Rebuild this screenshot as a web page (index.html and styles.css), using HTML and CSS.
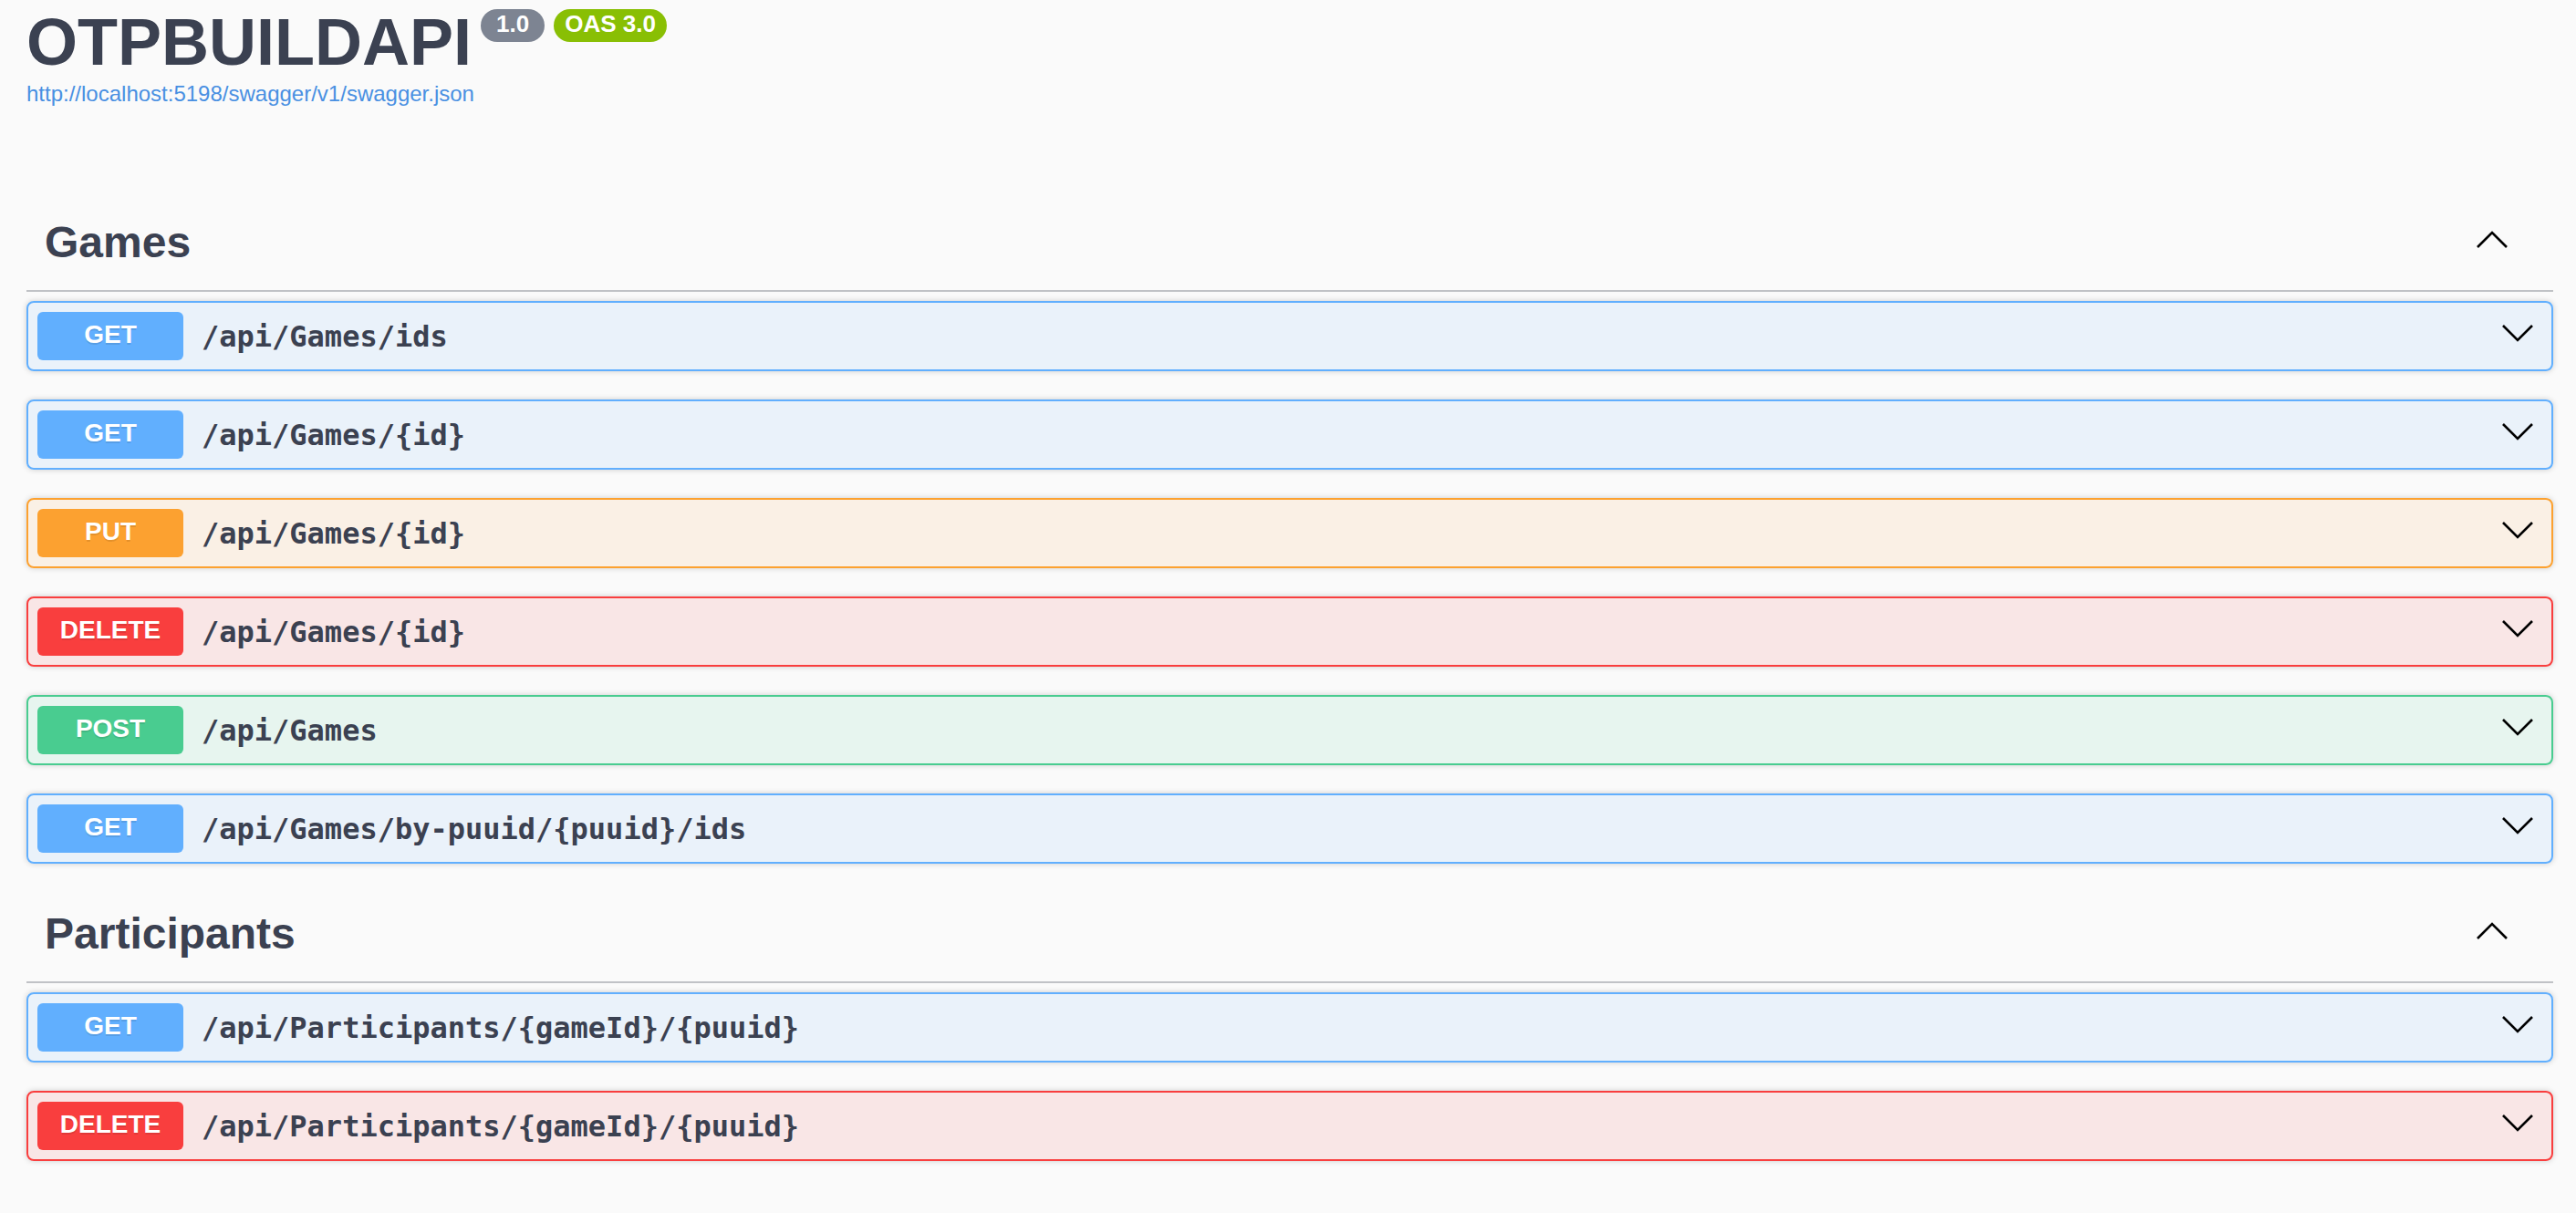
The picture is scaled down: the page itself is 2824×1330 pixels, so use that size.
FILE: index.html
```html
<!DOCTYPE html>
<html lang="en">
<head>
<meta charset="utf-8">
<title>OTPBUILDAPI</title>
<link rel="stylesheet" href="styles.css">
</head>
<body>
<div class="wrapper">
  <section class="info">
    <h2 class="title"><span class="title-text">OTPBUILDAPI</span><small class="badge badge-version">1.0</small><small class="badge badge-oas">OAS 3.0</small></h2>
    <a class="spec-link" href="#">http://localhost:5198/swagger/v1/swagger.json</a>
  </section>

  <section class="tag-section">
    <h3 class="tag"><span class="tag-name">Games</span><svg class="arrow" viewBox="0 0 40 40"><polyline points="4,25 20,9 36,25"/></svg></h3>
    <div class="opblock opblock-get"><span class="method">GET</span><span class="path">/api/Games/ids</span><svg class="arrow" viewBox="0 0 40 40"><polyline points="4,8 20,24 36,8"/></svg></div>
    <div class="opblock opblock-get"><span class="method">GET</span><span class="path">/api/Games/{id}</span><svg class="arrow" viewBox="0 0 40 40"><polyline points="4,8 20,24 36,8"/></svg></div>
    <div class="opblock opblock-put"><span class="method">PUT</span><span class="path">/api/Games/{id}</span><svg class="arrow" viewBox="0 0 40 40"><polyline points="4,8 20,24 36,8"/></svg></div>
    <div class="opblock opblock-delete"><span class="method">DELETE</span><span class="path">/api/Games/{id}</span><svg class="arrow" viewBox="0 0 40 40"><polyline points="4,8 20,24 36,8"/></svg></div>
    <div class="opblock opblock-post"><span class="method">POST</span><span class="path">/api/Games</span><svg class="arrow" viewBox="0 0 40 40"><polyline points="4,8 20,24 36,8"/></svg></div>
    <div class="opblock opblock-get"><span class="method">GET</span><span class="path">/api/Games/by-puuid/{puuid}/ids</span><svg class="arrow" viewBox="0 0 40 40"><polyline points="4,8 20,24 36,8"/></svg></div>
  </section>

  <section class="tag-section">
    <h3 class="tag"><span class="tag-name">Participants</span><svg class="arrow" viewBox="0 0 40 40"><polyline points="4,25 20,9 36,25"/></svg></h3>
    <div class="opblock opblock-get"><span class="method">GET</span><span class="path">/api/Participants/{gameId}/{puuid}</span><svg class="arrow" viewBox="0 0 40 40"><polyline points="4,8 20,24 36,8"/></svg></div>
    <div class="opblock opblock-delete"><span class="method">DELETE</span><span class="path">/api/Participants/{gameId}/{puuid}</span><svg class="arrow" viewBox="0 0 40 40"><polyline points="4,8 20,24 36,8"/></svg></div>
  </section>
</div>
</body>
</html>
```

FILE: styles.css
```css
html, body {
  margin: 0;
  padding: 0;
}

body {
  background: #fafafa;
  color: #3b4151;
  font-family: "Liberation Sans", Arial, sans-serif;
}

.wrapper {
  padding: 0 25px 0 29px;
}

/* ---------- info ---------- */
.info {
  padding-top: 7px;
  margin-bottom: 101px;
}

.title {
  display: flex;
  align-items: flex-start;
  margin: 0;
  font-size: 72px;
  line-height: 78px;
  font-weight: 700;
  color: #3b4151;
}

.badge {
  display: block;
  margin-top: 3px;
  margin-left: 10px;
  padding-bottom: 4px;
  border-radius: 18px;
  font-size: 26px;
  line-height: 32px;
  font-weight: 700;
  color: #fff;
}

.badge-version {
  background: #7d8492;
  padding-left: 17px;
  padding-right: 17px;
}

.badge-oas {
  background: #89bf04;
  padding-left: 12px;
  padding-right: 12px;
}

.spec-link {
  display: block;
  margin-top: 4px;
  font-size: 24px;
  line-height: 28px;
  color: #4990e2;
  text-decoration: none;
}

/* ---------- tags ---------- */
.tag {
  display: flex;
  align-items: center;
  margin: 0 0 10px;
  padding: 18px 47px 22px 20px;
  border-bottom: 2px solid rgba(59, 65, 81, 0.3);
  font-size: 48px;
  line-height: 60px;
  font-weight: 700;
  color: #3b4151;
}

.tag-name {
  flex: 1;
}

.arrow {
  flex: none;
  width: 40px;
  height: 40px;
  fill: none;
  stroke: #000;
  stroke-width: 2.6;
  stroke-linecap: butt;
  stroke-linejoin: miter;
}

/* ---------- operations ---------- */
.opblock {
  display: flex;
  align-items: center;
  margin-bottom: 31px;
  padding: 10px;
  border: 2px solid #000;
  border-radius: 8px;
  box-shadow: 0 0 6px rgba(0, 0, 0, 0.19);
}

.opblock:last-child {
  margin-bottom: 29px;
}

.method {
  flex: none;
  box-sizing: border-box;
  min-width: 160px;
  padding: 10px 0 14px;
  border-radius: 6px;
  font-size: 28px;
  line-height: 29px;
  font-weight: 700;
  text-align: center;
  color: #fff;
  text-shadow: 0 2px 0 rgba(0, 0, 0, 0.1);
}

.path {
  flex: 1;
  padding: 0 20px;
  font-family: "DejaVu Sans Mono", "Liberation Mono", monospace;
  font-size: 32px;
  font-weight: 700;
  color: #3b4151;
}

.opblock .arrow {
  margin-right: 7px;
}

.opblock-get {
  background: rgba(97, 175, 254, 0.1);
  border-color: #61affe;
}
.opblock-get .method {
  background: #61affe;
}

.opblock-put {
  background: rgba(252, 161, 48, 0.1);
  border-color: #fca130;
}
.opblock-put .method {
  background: #fca130;
}

.opblock-delete {
  background: rgba(249, 62, 62, 0.1);
  border-color: #f93e3e;
}
.opblock-delete .method {
  background: #f93e3e;
}

.opblock-post {
  background: rgba(73, 204, 144, 0.1);
  border-color: #49cc90;
}
.opblock-post .method {
  background: #49cc90;
}
```
